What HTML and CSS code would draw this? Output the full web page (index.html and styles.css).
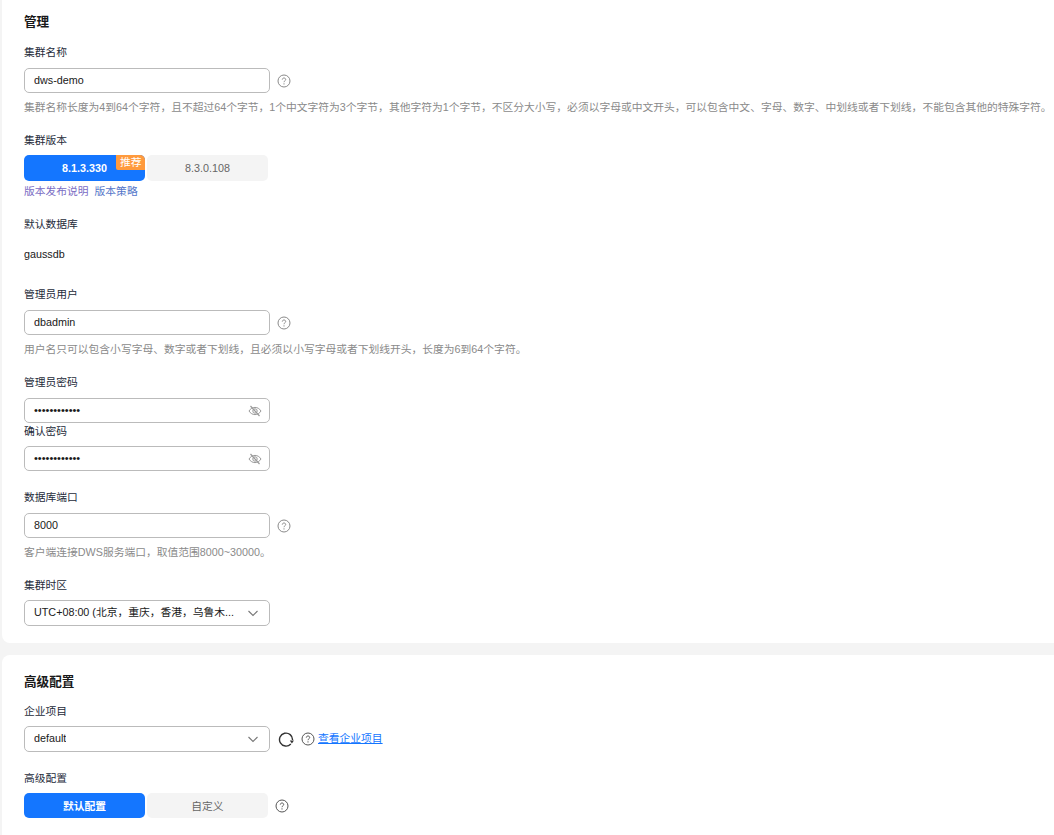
FILE: index.html
```html
<!DOCTYPE html>
<html lang="en">
<head>
  <meta charset="UTF-8" />
  <meta name="viewport" content="width=device-width, initial-scale=1.0" />
  <title>管理</title>
  <link rel="stylesheet" href="styles.css">
</head>
<body>
  <svg class="sprites" width="0" height="0">
    <symbol id="help" viewBox="0 0 14 14">
      <circle cx="7" cy="7" r="6" fill="none" stroke="currentColor" />
      <path d="M5.3 5.6c0-1 .8-1.6 1.7-1.6s1.7.6 1.7 1.5c0 1.3-1.7 1.3-1.7 2.7" fill="none" stroke="currentColor" />
      <path d="M7 9.3v1.2" fill="none" stroke="currentColor" />
    </symbol>
    <symbol id="eye-off" viewBox="0 0 14 14">
      <path d="M1 7c1.5-2.4 3.6-3.6 6-3.6s4.500 1.200 6 3.600c-1.500 2.400-3.600 3.600-6 3.600S2.500 9.400 1 7z" fill="none" stroke="currentColor" />
      <circle cx="7" cy="7" r="2.200" fill="none" stroke="currentColor" />
      <path d="M2.500 2l9 10" fill="none" stroke="currentColor" stroke-width="1.200" />
    </symbol>
    <symbol id="chevron" viewBox="0 0 12 12">
      <path d="M1.500 4l4.500 4.500L10.500 4" fill="none" stroke="currentColor" stroke-width="1.100" />
    </symbol>
    <symbol id="refresh" viewBox="0 0 16 16">
      <path d="M12.800 13A6.500 6.500 0 1 1 14.500 9" fill="none" stroke="currentColor" stroke-width="1.400" />
      <path d="M11.800 9.500h4.200l-2.100 3z" fill="currentColor" />
    </symbol>
  </svg>

  <section class="card card-basic">
    <h2 class="card-title">管理</h2>

    <div class="field">
      <div class="field-label">集群名称</div>
      <div class="control-row">
        <div class="input">dws-demo</div>
        <svg class="icon-help"><use href="#help" /></svg>
      </div>
      <div class="hint">集群名称长度为4到64个字符，且不超过64个字节，1个中文字符为3个字节，其他字符为1个字节，不区分大小写，必须以字母或中文开头，可以包含中文、字母、数字、中划线或者下划线，不能包含其他的特殊字符。</div>
    </div>

    <div class="field">
      <div class="field-label label-near">集群版本</div>
      <div class="segments">
        <div class="segment active">8.1.3.330<span class="badge">推荐</span></div>
        <div class="segment">8.3.0.108</div>
      </div>
      <div class="links"><a class="visited">版本发布说明</a><a>版本策略</a></div>
    </div>

    <div class="field">
      <div class="field-label">默认数据库</div>
      <div class="static-value">gaussdb</div>
    </div>

    <div class="field">
      <div class="field-label">管理员用户</div>
      <div class="control-row">
        <div class="input">dbadmin</div>
        <svg class="icon-help"><use href="#help" /></svg>
      </div>
      <div class="hint">用户名只可以包含小写字母、数字或者下划线，且必须以小写字母或者下划线开头，长度为6到64个字符。</div>
    </div>

    <div class="field field-tight">
      <div class="field-label">管理员密码</div>
      <div class="control-row">
        <div class="input password">••••••••••••<svg class="icon-eye"><use href="#eye-off" /></svg></div>
      </div>
    </div>

    <div class="field field-wide">
      <div class="field-label label-near">确认密码</div>
      <div class="control-row">
        <div class="input password">••••••••••••<svg class="icon-eye"><use href="#eye-off" /></svg></div>
      </div>
    </div>

    <div class="field">
      <div class="field-label">数据库端口</div>
      <div class="control-row">
        <div class="input">8000</div>
        <svg class="icon-help"><use href="#help" /></svg>
      </div>
      <div class="hint">客户端连接DWS服务端口，取值范围8000~30000。</div>
    </div>

    <div class="field">
      <div class="field-label label-near">集群时区</div>
      <div class="control-row">
        <div class="input select"><span class="select-text">UTC+08:00 (北京，重庆，香港，乌鲁木...</span><svg class="icon-chevron"><use href="#chevron" /></svg></div>
      </div>
    </div>
  </section>

  <section class="card card-advanced">
    <h2 class="card-title title-near">高级配置</h2>

    <div class="field field-wide">
      <div class="field-label label-near">企业项目</div>
      <div class="control-row">
        <div class="input select"><span class="select-text">default</span><svg class="icon-chevron"><use href="#chevron" /></svg></div>
        <svg class="icon-refresh"><use href="#refresh" /></svg>
        <svg class="icon-help dark"><use href="#help" /></svg>
        <a class="project-link">查看企业项目</a>
      </div>
    </div>

    <div class="field">
      <div class="field-label label-near">高级配置</div>
      <div class="control-row">
        <div class="segments segments-low">
          <div class="segment active">默认配置</div>
          <div class="segment">自定义</div>
        </div>
        <svg class="icon-help dark"><use href="#help" /></svg>
      </div>
    </div>
  </section>
</body>
</html>
```

FILE: styles.css
```css
html, body {
  height: 100%;
}

body {
  margin: 0;
  padding-left: 2px;
  background: #f4f4f4;
  color: #252b3a;
  font-family: "Liberation Sans", "Noto Sans CJK SC", sans-serif;
  font-size: 10.77px;
  line-height: 16px;
  overflow: hidden;
}

.sprites {
  position: absolute;
}

.card {
  background: #fff;
  padding: 14px 0 17px 22px;
  white-space: nowrap;
  box-sizing: border-box;
}

.card-basic {
  border-radius: 0 0 0 8px;
  height: 643px;
  padding-bottom: 0;
}

.card-advanced {
  border-radius: 8px 0 0 0;
  margin-top: 12px;
  height: 180px;
  padding-top: 19px;
}

.card-title {
  margin: 0 0 14px;
  font-size: 12.6px;
  line-height: 16px;
  font-weight: 700;
  color: #191919;
}

.title-near {
  margin-bottom: 13px;
}

.field {
  margin-bottom: 17px;
}

.field-tight {
  margin-bottom: 0;
}

.field-wide {
  margin-bottom: 18px;
}

.field-label {
  margin-bottom: 8px;
}

.label-near {
  margin-bottom: 7px;
}

.control-row {
  display: flex;
  align-items: center;
}

.input {
  width: 246px;
  height: 25px;
  box-sizing: border-box;
  display: flex;
  align-items: center;
  justify-content: space-between;
  border: 1px solid #bbb;
  border-radius: 5px;
  padding: 0 9px 2px;
  color: #191919;
  background: #fff;
}

.input svg {
  margin-bottom: -2px;
}

.password {
  font-size: 11px;
  padding-right: 7px;
}

.select {
  height: 26px;
  padding-right: 10px;
}

.select-text {
  overflow: hidden;
  text-overflow: ellipsis;
}

.hint {
  margin-top: 6px;
  color: #8a8a8a;
}

.icon-help {
  width: 14px;
  height: 14px;
  margin-left: 7px;
  color: #8a8a8a;
}

.icon-help.dark {
  color: #555;
  margin-left: 7px;
}

.icon-eye {
  width: 14px;
  height: 14px;
  color: #999;
}

.icon-chevron {
  flex: none;
  width: 12px;
  height: 12px;
  color: #777;
}

.icon-refresh {
  width: 16px;
  height: 16px;
  margin-left: 8px;
  color: #333;
}

.segments {
  display: flex;
  gap: 2px;
}

.segment {
  position: relative;
  width: 121px;
  height: 26px;
  display: flex;
  align-items: center;
  justify-content: center;
  border-radius: 5px;
  background: #f4f4f4;
  color: #666;
}

.segments-low .segment {
  height: 25px;
}

.segment.active {
  background: #1476ff;
  color: #fff;
  font-weight: 700;
}

.badge {
  position: absolute;
  top: 0;
  right: 0;
  padding: 0 3.5px;
  height: 15px;
  line-height: 15px;
  background: #ff9a3d;
  color: #fff;
  font-weight: 400;
  border-radius: 0 5px 0 2px;
}

.links {
  margin-top: 2px;
  color: #5576c9;
}

.links a {
  margin-right: 6px;
}

.links .visited {
  color: #7a6cc4;
}

.static-value {
  margin-top: 14px;
  margin-bottom: 24px;
  color: #191919;
}

.project-link {
  margin-left: 3px;
  margin-top: -2px;
  color: #1476ff;
  text-decoration: underline;
}
```
